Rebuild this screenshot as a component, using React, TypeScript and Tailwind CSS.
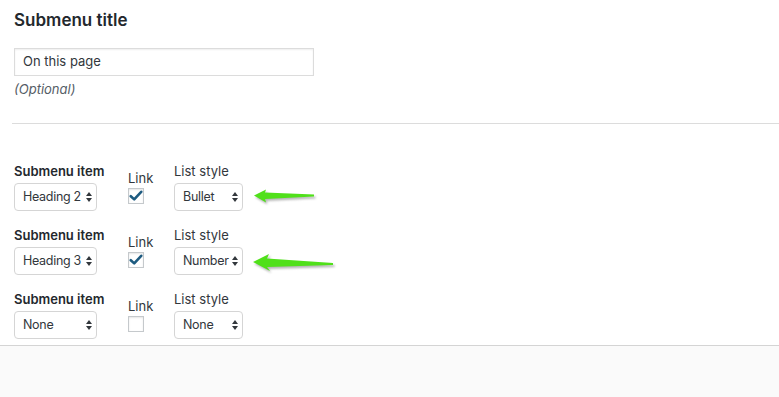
const font = { fontFamily: "Inter, 'Noto Sans', sans-serif" };

const UpDown = () => (
  <svg width="6" height="10" viewBox="0 0 6 10" className="shrink-0">
    <path d="M3 0 L6 4 L0 4 Z" fill="#32373c" />
    <path d="M3 10 L6 6 L0 6 Z" fill="#32373c" />
  </svg>
);

const FakeSelect = ({ label, width }: { label: string; width: string }) => (
  <div
    className={`${width} h-[28px] mt-[3px] flex items-center justify-between pl-[8px] pr-[4px] bg-white border border-[#d5d5d5] rounded-[4px] text-[12.5px] tracking-[-0.3px] text-[#32373c]`}
  >
    <span className="whitespace-nowrap">{label}</span>
    <UpDown />
  </div>
);

const Checkbox = ({ checked }: { checked: boolean }) => (
  <div className="w-[16px] h-[16px] mt-[1px] bg-white border border-[#c5c9cc] shadow-[inset_0_1px_2px_rgba(0,0,0,0.1)] flex items-center justify-center">
    {checked && (
      <svg width="14" height="12" viewBox="0 0 14 12">
        <path
          d="M1.8 6.2 L5.2 9.4 L12.2 1.8"
          fill="none"
          stroke="#1d5b80"
          strokeWidth="2.6"
          strokeLinecap="round"
          strokeLinejoin="round"
        />
      </svg>
    )}
  </div>
);

const Arrow = ({ long }: { long: boolean }) =>
  long ? (
    <svg width="90" height="30" viewBox="0 0 90 30" className="ml-[6px] mb-[-4px] self-end">
      <defs>
        <filter id="blur2" x="-10%" y="-30%" width="120%" height="160%">
          <feGaussianBlur stdDeviation="1" />
        </filter>
      </defs>
      <path
        d="M4 13 L20 5 L18 9.5 L84 14 L84 16 L18 18 L21 22 Z"
        fill="#777"
        opacity="0.55"
        transform="translate(1.5 2)"
        filter="url(#blur2)"
      />
      <path d="M4 13 L20 5 L18 9.5 L84 14 L84 16 L18 18 L21 22 Z" fill="#50e01a" />
    </svg>
  ) : (
    <svg width="75" height="30" viewBox="0 0 75 30" className="ml-[6px] mb-[-2px] self-end">
      <defs>
        <filter id="blur1" x="-10%" y="-30%" width="120%" height="160%">
          <feGaussianBlur stdDeviation="1" />
        </filter>
      </defs>
      <path
        d="M5 12.5 L17 6.5 L16 9.5 L65 11.5 L65 13.5 L16 16 L17 19.5 Z"
        fill="#777"
        opacity="0.55"
        transform="translate(1.5 2)"
        filter="url(#blur1)"
      />
      <path d="M5 12.5 L17 6.5 L16 9.5 L65 11.5 L65 13.5 L16 16 L17 19.5 Z" fill="#50e01a" />
    </svg>
  );

const rows = [
  { heading: "Heading 2", checked: true, style: "Bullet", arrow: "short" },
  { heading: "Heading 3", checked: true, style: "Number", arrow: "long" },
  { heading: "None", checked: false, style: "None", arrow: "" },
];

export default function App() {
  return (
    <div className="w-[779px] h-[397px] bg-white overflow-hidden flex flex-col" style={font}>
      <div className="px-[14px] pt-[9px]">
        <h2 className="text-[17px] leading-[22px] font-semibold text-[#23282d]">Submenu title</h2>
        <div className="mt-[17px] w-[300px] h-[28px] flex items-center px-[8px] border border-[#dcdcdc] shadow-[inset_0_1px_2px_rgba(0,0,0,0.07)] text-[13px] text-[#32373c]">
          On this page
        </div>
        <p className="mt-[4px] text-[13px] leading-[18px] italic text-[#555d66]">(Optional)</p>
      </div>
      <div className="ml-[12px] mt-[25px] h-px bg-[#dcdcdc]" />

      <div className="px-[14px] pt-[38px] flex flex-col gap-[15px]">
        {rows.map((r, i) => (
          <div key={i} className="flex items-start">
            <div className="flex flex-col w-[83px]">
              <span className="text-[13px] leading-[18px] font-semibold text-[#23282d] whitespace-nowrap">
                Submenu item
              </span>
              <FakeSelect label={r.heading} width="w-[83px]" />
            </div>
            <div className="flex flex-col ml-[31px] mt-[7px] w-[32px]">
              <span className="text-[13px] leading-[18px] text-[#32373c]">Link</span>
              <Checkbox checked={r.checked} />
            </div>
            <div className="flex flex-col ml-[14px]">
              <span className="text-[13px] leading-[18px] text-[#32373c]">List style</span>
              <FakeSelect label={r.style} width="w-[69px]" />
            </div>
            {r.arrow === "short" && <Arrow long={false} />}
            {r.arrow === "long" && <Arrow long={true} />}
          </div>
        ))}
      </div>

      <div className="mt-[6px] h-px bg-[#d4d4d4]" />
      <div className="flex-1 bg-[#fafafa]" />
    </div>
  );
}
